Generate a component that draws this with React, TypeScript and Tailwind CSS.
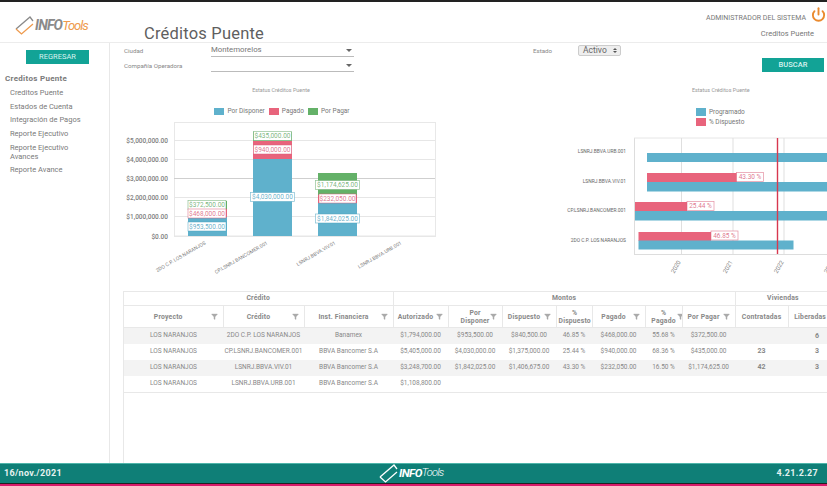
import { Power, Filter } from 'lucide-react';

const sidebarItems = [
  'Creditos Puente',
  'Estados de Cuenta',
  'Integración de Pagos',
  'Reporte Ejecutivo',
  'Reporte Ejecutivo Avances',
  'Reporte Avance',
];

const columns = [
  { label: 'Proyecto', width: 99 },
  { label: 'Crédito', width: 81 },
  { label: 'Inst. Financiera', width: 89 },
  { label: 'Autorizado', width: 55 },
  { label: 'Por Disponer', width: 54, wrap: true },
  { label: 'Dispuesto', width: 54 },
  { label: '% Dispuesto', width: 36, wrap: true, noFilter: true },
  { label: 'Pagado', width: 53 },
  { label: '% Pagado', width: 37, wrap: true },
  { label: 'Por Pagar', width: 53 },
  { label: 'Contratadas', width: 53, noFilter: true },
  { label: 'Liberadas', width: 50, noFilter: true },
];

const rows = [
  ['LOS NARANJOS', '2DO C.P. LOS NARANJOS', 'Banamex', '$1,794,000.00', '$953,500.00', '$840,500.00', '46.85 %', '$468,000.00', '55.68 %', '$372,500.00', '', '6'],
  ['LOS NARANJOS', 'CP.LSNRJ.BANCOMER.001', 'BBVA Bancomer S.A', '$5,405,000.00', '$4,030,000.00', '$1,375,000.00', '25.44 %', '$940,000.00', '68.36 %', '$435,000.00', '23', '3'],
  ['LOS NARANJOS', 'LSNRJ.BBVA.VIV.01', 'BBVA Bancomer S.A', '$3,248,700.00', '$1,842,025.00', '$1,406,675.00', '43.30 %', '$232,050.00', '16.50 %', '$1,174,625.00', '42', '3'],
  ['LOS NARANJOS', 'LSNRJ.BBVA.URB.001', 'BBVA Bancomer S.A', '$1,108,800.00', '', '', '', '', '', '', '', ''],
];

const BLUE = '#5fb1cc';
const RED = '#e8647c';
const GREEN = '#64b168';

function Logo({ light = false }: { light?: boolean }) {
  const stroke = light ? '#ffffff' : '#8a8a8a';
  const lower = light ? '#ffffff' : '#ee9a4d';
  return (
    <svg width="20" height="20" viewBox="0 0 20 20" fill="none" strokeWidth="1.3">
      <path d="M1 13 L15 1 L18 5" stroke={stroke} />
      <path d="M1 13 L6.5 18 L18 8" stroke={lower} />
    </svg>
  );
}

function Label({ x, y, text, color, w }: { x: number; y: number; text: string; color: string; w: number }) {
  return (
    <g>
      <rect x={x - w / 2} y={y - 4.5} width={w} height={9} fill="#ffffff" stroke={color} strokeWidth="0.7" strokeOpacity="0.7" />
      <text x={x} y={y + 2.3} textAnchor="middle" fontSize="6.5" fill={color} fillOpacity="0.85">{text}</text>
    </g>
  );
}

function StackedChart() {
  const yTicks = [
    ['$5,000,000.00', 140.5],
    ['$4,000,000.00', 159.5],
    ['$3,000,000.00', 178.5],
    ['$2,000,000.00', 197.5],
    ['$1,000,000.00', 216.5],
    ['$0.00', 236],
  ] as const;
  return (
    <svg width="320" height="162" viewBox="124 122 320 162" className="block" fontFamily="Roboto, sans-serif">
      <rect x="174.5" y="122.5" width="261" height="114" fill="none" stroke="#e8e8e8" />
      {yTicks.map(([t, y]) => (
        <g key={t}>
          <line x1="174" x2="435" y1={y} y2={y} stroke={y === 178.5 ? '#cfcfcf' : '#e6e6e6'} />
          <text x="168" y={y + 2.5} textAnchor="end" fontSize="6.5" fontWeight="500" fill="#808080">{t}</text>
        </g>
      ))}
      {/* barras */}
      <rect x="188" y="217" width="39" height="19" fill={BLUE} />
      <rect x="188" y="209" width="39" height="8" fill={RED} />
      <rect x="188" y="201" width="39" height="8" fill={GREEN} />
      <rect x="253" y="159" width="39" height="77" fill={BLUE} />
      <rect x="253" y="141" width="39" height="18" fill={RED} />
      <rect x="253" y="132" width="39" height="9" fill={GREEN} />
      <rect x="318" y="203" width="39" height="33" fill={BLUE} />
      <rect x="318" y="195" width="39" height="8" fill={RED} />
      <rect x="318" y="173" width="39" height="22" fill={GREEN} />
      <Label x={207} y={205} text="$372,500.00" color="#64a868" w={38} />
      <Label x={207} y={213.5} text="$468,000.00" color="#d9607a" w={38} />
      <Label x={207} y={226.5} text="$953,500.00" color="#4fa3c0" w={38} />
      <Label x={272.5} y={136} text="$435,000.00" color="#64a868" w={38} />
      <Label x={272.5} y={149.5} text="$940,000.00" color="#d9607a" w={38} />
      <Label x={272.5} y={197} text="$4,030,000.00" color="#4fa3c0" w={44} />
      <Label x={337.5} y={185} text="$1,174,625.00" color="#64a868" w={44} />
      <Label x={337.5} y={198.5} text="$232,050.00" color="#d9607a" w={37} />
      <Label x={337.5} y={218.5} text="$1,842,025.00" color="#4fa3c0" w={44} />
      {[
        ['2DO C.P. LOS NARANJOS', 206, 244],
        ['CP.LSNRJ.BANCOMER.001', 268, 244],
        ['LSNRJ.BBVA.VIV.01', 336, 244],
        ['LSNRJ.BBVA.URB.001', 402, 244],
      ].map(([t, x, y]) => (
        <text
          key={t as string}
          x={x as number}
          y={y as number}
          textAnchor="end"
          fontSize="5"
          fill="#808080"
          transform={`rotate(-30 ${x} ${y})`}
        >
          {t}
        </text>
      ))}
    </svg>
  );
}

function GanttChart() {
  const names: [string, number][] = [
    ['LSNRJ.BBVA.URB.001', 152],
    ['LSNRJ.BBVA.VIV.01', 181.5],
    ['CP.LSNRJ.BANCOMER.001', 211],
    ['2DO C.P. LOS NARANJOS', 241],
  ];
  return (
    <svg width="267" height="162" viewBox="560 122 267 162" className="block" fontFamily="Roboto, sans-serif">
      <line x1="634.5" x2="634.5" y1="138" y2="254" stroke="#dddddd" />
      <line x1="634" x2="827" y1="138" y2="138" stroke="#e6e6e6" />
      <line x1="634" x2="827" y1="254.5" y2="254.5" stroke="#dddddd" />
      {[681.5, 733, 784].map((x) => (
        <line key={x} x1={x} x2={x} y1="138" y2="254" stroke="#dfdfdf" />
      ))}
      {names.map(([t, y]) => (
        <text key={t} x="626" y={y + 1} textAnchor="end" fontSize="4.9" fill="#666666">{t}</text>
      ))}
      <rect x="647" y="153" width="180" height="9" fill={BLUE} />
      <rect x="647" y="173" width="90" height="9.5" fill={RED} />
      <rect x="647" y="182" width="180" height="9.5" fill={BLUE} />
      <rect x="635" y="202" width="52" height="9.5" fill={RED} />
      <rect x="635" y="211" width="192" height="9.5" fill={BLUE} />
      <rect x="638.5" y="232" width="72.5" height="9" fill={RED} />
      <rect x="638.5" y="240.5" width="155" height="9" fill={BLUE} />
      <Label x={750} y={177} text="43.30 %" color="#d9607a" w={27} />
      <Label x={700.5} y={206} text="25.44 %" color="#d9607a" w={27} />
      <Label x={724.5} y={235.5} text="46.85 %" color="#d9607a" w={27} />
      <line x1="777.5" x2="777.5" y1="138" y2="254" stroke="#d8384f" strokeWidth="1.4" />
      {[
        ['2020', 681],
        ['2021', 733],
        ['2022', 784],
        ['2023', 834],
      ].map(([t, x]) => (
        <text key={t} x={x} y="262" textAnchor="end" fontSize="6" fill="#808080" transform={`rotate(-60 ${x} 262)`}>{t}</text>
      ))}
    </svg>
  );
}

function Caret() {
  return <span className="h-0 w-0 border-x-[3.5px] border-t-[3.5px] border-x-transparent border-t-[#666666]" />;
}

export default function App() {
  return (
    <div className="flex h-[486px] w-[827px] flex-col overflow-hidden bg-white font-['Roboto',sans-serif] text-[#666666]">
      <div className="h-[2px] shrink-0 bg-[#222222]" />
      {/* encabezado */}
      <header className="flex h-[41px] shrink-0 items-start border-b border-[#ececec]">
        <div className="flex w-[144px] items-center pl-[15px] pt-[13px]">
          <Logo />
          <span className="text-[14px] font-bold italic tracking-[-0.8px] text-[#8a8a8a]">INFO</span>
          <span className="text-[13px] italic tracking-[-1.1px] text-[#ee9a4d]">Tools</span>
        </div>
        <h1 className="pt-[22px] text-[16.5px] leading-[19px] tracking-[0.2px] text-[#5f5f5f]">Créditos Puente</h1>
        <div className="ml-auto flex flex-col items-end pr-[13px] pt-[5px] text-[#777777]">
          <div className="flex items-start gap-[5px]">
            <span className="pt-[7px] text-[7px] leading-[9px]">ADMINISTRADOR DEL SISTEMA</span>
            <Power size={15} strokeWidth={3} className="mr-[-12px] text-[#ea8a2e]" />
          </div>
          <span className="mt-[6px] text-[7.5px] leading-[9px]">Creditos Puente</span>
        </div>
      </header>

      <div className="flex min-h-0 flex-1">
        {/* menu lateral */}
        <aside className="w-[110px] shrink-0 border-r border-[#e8e8e8] pt-[7px]">
          <button className="ml-[26px] block h-[14px] w-[63px] bg-[#12a396] text-[7.5px] text-[#d8f2ef]">REGRESAR</button>
          <h2 className="mt-[9px] pl-[5px] text-[8px] font-bold tracking-[0.3px] text-[#7a7a7a]">Creditos Puente</h2>
          <ul className="mt-[1px] pl-[10px] pr-[24px] text-[7.5px] text-[#7a7a7a]">
            {sidebarItems.map((item) => (
              <li key={item} className="py-[2.3px] leading-[9px]">{item}</li>
            ))}
          </ul>
        </aside>

        <main className="flex min-w-0 flex-1 flex-col">
          {/* filtros */}
          <div className="flex h-[40px] shrink-0 pl-[14px] text-[6.2px] text-[#888888]">
            <div className="w-[87px]">
              <div className="pt-[4px]">Ciudad</div>
              <div className="pt-[6px]">Compañía Operadora</div>
            </div>
            <div className="w-[143px]">
              <div className="mt-[1px] flex h-[13px] items-center justify-between border-b border-[#bbbbbb] pr-[2px] text-[7.8px] text-[#777777]">
                Montemorelos
                <Caret />
              </div>
              <div className="mt-[2px] flex h-[13px] items-center justify-end border-b border-[#bbbbbb] pr-[2px]">
                <Caret />
              </div>
            </div>
            <div className="ml-[179px] w-[45px] pt-[4px]">Estado</div>
            <div className="mt-[2px] flex h-[11px] w-[43px] items-center justify-between rounded-[2px] border border-[#cccccc] bg-[#eeeeee] pl-[4px] pr-[3px] text-[8.5px] text-[#666666]">
              Activo
              <span className="flex flex-col gap-px">
                <span className="h-0 w-0 border-x-[2px] border-b-[2px] border-x-transparent border-b-[#555555]" />
                <span className="h-0 w-0 border-x-[2px] border-t-[2px] border-x-transparent border-t-[#555555]" />
              </span>
            </div>
            <button className="ml-[141px] mt-[15px] h-[14px] w-[62px] bg-[#12a396] text-[7.5px] font-medium text-[#d8f2ef]">BUSCAR</button>
          </div>

          {/* graficas */}
          <div className="h-[208px] shrink-0">
            <div className="flex h-[39px]">
              <div className="w-[339px] text-center">
                <div className="pl-[3px] pt-[3px] text-[5.4px] text-[#999999]">Estatus Créditos Puente</div>
                <div className="mt-[13px] flex justify-center gap-[4px] pl-[5px] text-[6.5px] text-[#777777]">
                  <span className="flex items-center gap-[3px]"><i className="h-[7px] w-[10px] bg-[#5fb1cc]" />Por Disponer</span>
                  <span className="flex items-center gap-[3px]"><i className="h-[7px] w-[10px] bg-[#e8647c]" />Pagado</span>
                  <span className="flex items-center gap-[3px]"><i className="h-[7px] w-[10px] bg-[#64b168]" />Por Pagar</span>
                </div>
              </div>
              <div className="ml-[243px] w-[100px]">
                <div className="pt-[3px] text-[5.4px] text-[#999999]">Estatus Créditos Puente</div>
                <div className="mt-[14px] flex flex-col gap-[2px] pl-[4px] text-[6.5px] leading-[8px] text-[#777777]">
                  <span className="flex items-center gap-[3px]"><i className="h-[8px] w-[10px] bg-[#5fb1cc]" />Programado</span>
                  <span className="flex items-center gap-[3px]"><i className="h-[8px] w-[10px] bg-[#e8647c]" />% Dispuesto</span>
                </div>
              </div>
            </div>
            <div className="flex justify-between pl-[14px]">
              <StackedChart />
              <GanttChart />
            </div>
          </div>

          {/* tabla */}
          <div className="ml-[13px] flex-1 overflow-hidden border-l border-[#e8e8e8]">
            <table className="w-[714px] table-fixed border-collapse text-center text-[6.5px] text-[#888888]">
              <colgroup>
                {columns.map((c) => (
                  <col key={c.label} style={{ width: c.width }} />
                ))}
              </colgroup>
              <thead>
                <tr className="h-[14px] border-y border-[#e8e8e8] text-[6.8px] font-bold tracking-[0.2px]">
                  <th colSpan={3} className="border-r border-[#e8e8e8]">Crédito</th>
                  <th colSpan={7} className="border-r border-[#e8e8e8]">Montos</th>
                  <th colSpan={2} className="pr-[8px]">Viviendas</th>
                </tr>
                <tr className="h-[22px] border-b border-[#e8e8e8] text-[6.8px] font-bold leading-[8px] tracking-[0.2px]">
                  {columns.map((c) => (
                    <th key={c.label} className="relative overflow-hidden border-r border-[#e8e8e8] px-[2px]">
                      <span
                        className={
                          c.label === 'Liberadas'
                            ? 'block whitespace-nowrap pr-[6px]'
                            : c.wrap
                              ? 'mx-auto block w-min'
                              : c.noFilter
                                ? 'block whitespace-nowrap'
                                : 'block whitespace-nowrap pr-[10px]'
                        }
                      >
                        {c.label}
                      </span>
                      {!c.noFilter && (
                        <Filter
                          size={7}
                          fill="#aaaaaa"
                          strokeWidth={1}
                          className={
                            c.wrap && c.width < 40
                              ? 'absolute right-[-2px] top-[7px] text-[#aaaaaa]'
                              : 'absolute right-[5px] top-[7px] text-[#aaaaaa]'
                          }
                        />
                      )}
                    </th>
                  ))}
                </tr>
              </thead>
              <tbody>
                {rows.map((row, i) => (
                  <tr key={row[1]} className={i % 2 === 0 ? 'h-[16px] bg-[#f3f3f3]' : 'h-[16px] bg-white'}>
                    {row.map((cell, j) => (
                      <td
                        key={j}
                        className={
                          j === 11
                            ? 'whitespace-nowrap pl-[8px] text-[7px] font-bold'
                            : j === 10
                              ? 'whitespace-nowrap text-[7px] font-bold'
                              : 'whitespace-nowrap'
                        }
                      >
                        {cell}
                      </td>
                    ))}
                  </tr>
                ))}
                <tr className="h-px border-b border-[#e8e8e8]" />
              </tbody>
            </table>
          </div>
        </main>
      </div>

      {/* pie */}
      <footer className="flex h-[20px] shrink-0 items-center justify-between border-t border-[#4fb5aa] bg-[#0f7f77] pl-[4px] pr-[9px] text-[9px] font-bold text-[#e4f2f0]">
        <span className="tracking-[0.3px]">16/nov./2021</span>
        <div className="mr-[16px] flex items-center text-white">
          <Logo light />
          <span className="text-[11.5px] font-bold italic tracking-[-0.5px]">INFO</span>
          <span className="text-[11px] font-light italic tracking-[-0.8px]">Tools</span>
        </div>
        <span className="tracking-[0.3px]">4.21.2.27</span>
      </footer>
      <div className="h-px shrink-0 bg-[#222222]" />
      <div className="h-[2px] shrink-0 bg-[#d81b6a]" />
    </div>
  );
}
